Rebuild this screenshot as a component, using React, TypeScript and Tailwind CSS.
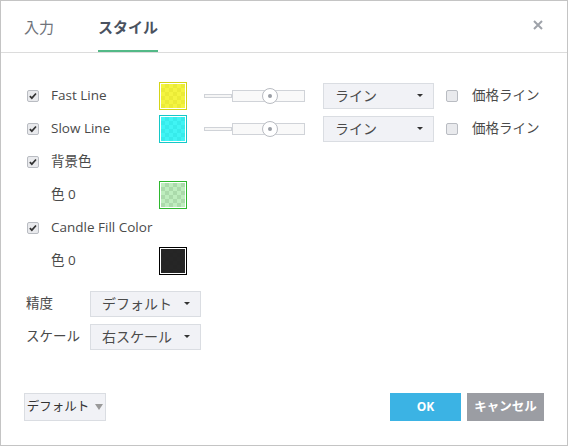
import React from 'react';

const font = "font-['Open_Sans','Noto_Sans_CJK_JP',sans-serif]";

function Check({ checked = true }: { checked?: boolean }) {
  return (
    <span className="flex h-[12px] w-[12px] items-center justify-center rounded-[2px] border border-[#b9bcc2] bg-[#e9eaed]">
      {checked && (
        <svg viewBox="0 0 12 12" className="h-[10px] w-[10px]">
          <path d="M2.2 6.2 L4.6 8.6 L9.6 3" fill="none" stroke="#333" strokeWidth="2" />
        </svg>
      )}
    </span>
  );
}

function Swatch({ border, fill }: { border: string; fill: string }) {
  return (
    <div className={`h-[28px] w-[28px] border-[1.5px] ${border} bg-white p-[1px]`}>
      <div className="relative h-full w-full bg-[image:repeating-conic-gradient(#dcdcdc_0_25%,#ffffff_0_50%)] bg-[length:8px_8px]">
        <div className={`absolute inset-0 ${fill}`} />
      </div>
    </div>
  );
}

function Slider() {
  return (
    <div className="relative flex h-[18px] w-[101px] items-center">
      <div className="h-[4px] w-[28px] border border-[#d0d3d8] bg-[#f6f6f6]" />
      <div className="h-[12px] flex-1 border border-[#d0d3d8] bg-[#f9f9f9]" />
      <div className="absolute left-[58px] top-[1px] flex h-[16px] w-[16px] items-center justify-center rounded-full border border-[#b9bcc2] bg-white">
        <div className="h-[4px] w-[4px] rounded-full bg-[#9a9ea5]" />
      </div>
    </div>
  );
}

function Select({ label, w }: { label: string; w: string }) {
  return (
    <div className={`flex h-[26px] ${w} items-center justify-between border border-[#dadde2] bg-[#f1f2f6] pl-[11px] pr-[10px] text-[14px] text-[#4a4a4a]`}>
      <span>{label}</span>
      <span className="h-0 w-0 border-x-[3.5px] border-t-[3.5px] border-x-transparent border-t-[#333]" />
    </div>
  );
}

function LineRow({ label, border, fill }: { label: string; border: string; fill: string }) {
  return (
    <div className="flex h-[33px] items-center">
      <div className="w-[25px] pl-[1px]"><Check /></div>
      <div className="w-[108px]">{label}</div>
      <div className="w-[45px]"><Swatch border={border} fill={fill} /></div>
      <div className="w-[119px]"><Slider /></div>
      <div className="w-[123px]"><Select label="ライン" w="w-[111px]" /></div>
      <div className="w-[26px]"><Check checked={false} /></div>
      <div>価格ライン</div>
    </div>
  );
}

export default function App() {
  return (
    <div className={`flex h-[446px] w-[568px] flex-col border border-[#c4c4c4] bg-white text-[13.5px] text-[#4a4a4a] ${font}`}>
      <div className="flex h-[52px] shrink-0 items-stretch border-b border-[#dcdcdc] px-[23px]">
        <div className="flex items-center pt-[1px] text-[15px] text-[#6f737a]">入力</div>
        <div className="ml-[44px] flex flex-col justify-center border-b-2 border-[#53b987] pt-[3px] text-[15px] font-semibold text-[#4a5260]">
          スタイル
        </div>
        <div className="flex-1" />
        <div className="flex items-center pb-[4px] pr-[1px]">
          <svg viewBox="0 0 10 10" className="h-[10px] w-[10px]">
            <path d="M1 1 L9 9 M9 1 L1 9" stroke="#9ea2a9" strokeWidth="2" />
          </svg>
        </div>
      </div>

      <div className="flex flex-col pl-[25px] pt-[26px]">
        <LineRow label="Fast Line" border="border-[#d4d417]" fill="bg-[#f0f000]/75" />
        <LineRow label="Slow Line" border="border-[#14c8c8]" fill="bg-[#00f0f0]/75" />
        <div className="flex h-[33px] items-center">
          <div className="w-[25px] pl-[1px]"><Check /></div>
          <div>背景色</div>
        </div>
        <div className="flex h-[33px] items-center">
          <div className="w-[25px]" />
          <div className="w-[108px]">色 0</div>
          <Swatch border="border-[#2eb82e]" fill="bg-[#6fd66f]/45" />
        </div>
        <div className="flex h-[33px] items-center">
          <div className="w-[25px] pl-[1px]"><Check /></div>
          <div>Candle Fill Color</div>
        </div>
        <div className="flex h-[33px] items-center">
          <div className="w-[25px]" />
          <div className="w-[108px]">色 0</div>
          <Swatch border="border-black" fill="bg-[#1a1a1a]/95" />
        </div>

        <div className="mt-[10px] flex h-[33px] items-center">
          <div className="w-[64px]">精度</div>
          <Select label="デフォルト" w="w-[111px]" />
        </div>
        <div className="flex h-[33px] items-center">
          <div className="w-[64px]">スケール</div>
          <Select label="右スケール" w="w-[111px]" />
        </div>
      </div>

      <div className="mt-auto mb-[24px] flex items-center px-[23px]">
        <div className="flex h-[28px] w-[82px] items-center justify-center gap-[6px] border border-[#dadde2] bg-[#f1f2f6] text-[12.5px] text-[#333]">
          <span>デフォルト</span>
          <span className="h-0 w-0 border-x-[4.5px] border-t-[6px] border-x-transparent border-t-[#9a9a9a]" />
        </div>
        <div className="flex-1" />
        <div className="flex h-[28px] w-[71px] items-center justify-center bg-[#3bb3e4] text-[12px] font-bold text-white">OK</div>
        <div className="ml-[6px] flex h-[28px] w-[77px] items-center justify-center bg-[#9b9da3] text-[12.5px] font-bold text-white">キャンセル</div>
      </div>
    </div>
  );
}
